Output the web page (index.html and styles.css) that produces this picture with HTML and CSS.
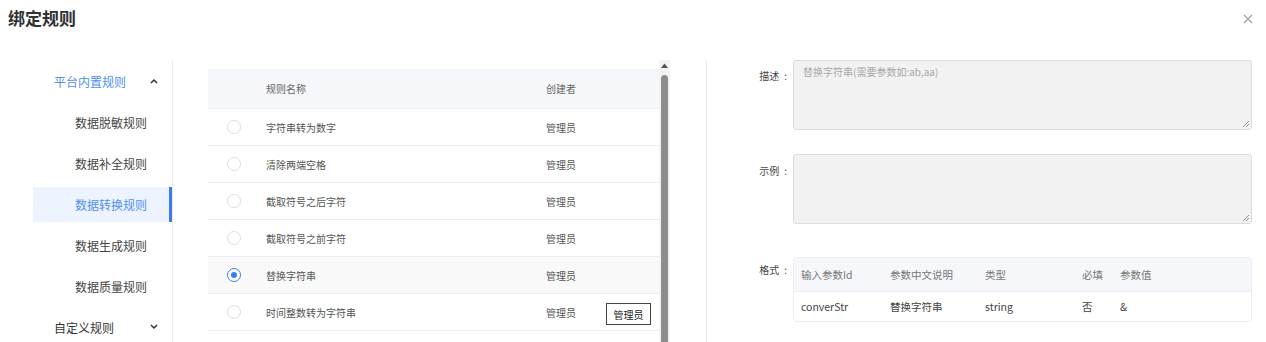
FILE: index.html
```html
<!DOCTYPE html>
<html lang="zh-CN">
<head>
<meta charset="utf-8">
<title>绑定规则</title>
<link rel="stylesheet" href="styles.css">
</head>
<body>
<div class="dialog">
  <div class="dlg-header">
    <div class="dlg-title">绑定规则</div>
    <svg class="dlg-close" width="10" height="10" viewBox="0 0 10 10"><path d="M1 1L9 9M9 1L1 9" stroke="#a0a0a0" stroke-width="1.2"/></svg>
  </div>
  <div class="dlg-body">
    <div class="menu">
      <div class="menu-group open">
        <span>平台内置规则</span>
        <svg class="caret" width="8" height="6" viewBox="0 0 8 6"><path d="M1 5L4 2L7 5" fill="none" stroke="#333" stroke-width="1.5"/></svg>
      </div>
      <div class="menu-item first">数据脱敏规则</div>
      <div class="menu-item">数据补全规则</div>
      <div class="menu-item active">数据转换规则</div>
      <div class="menu-item">数据生成规则</div>
      <div class="menu-item">数据质量规则</div>
      <div class="menu-group closed">
        <span>自定义规则</span>
        <svg class="caret" width="8" height="6" viewBox="0 0 8 6"><path d="M1 1L4 4L7 1" fill="none" stroke="#333" stroke-width="1.5"/></svg>
      </div>
    </div>

    <div class="table-wrap">
      <div class="rule-table">
        <div class="tr th">
          <div class="c-radio"></div>
          <div class="c-name">规则名称</div>
          <div class="c-creator">创建者</div>
        </div>
        <div class="tr">
          <div class="c-radio"><span class="radio"></span></div>
          <div class="c-name">字符串转为数字</div>
          <div class="c-creator">管理员</div>
        </div>
        <div class="tr">
          <div class="c-radio"><span class="radio"></span></div>
          <div class="c-name">清除两端空格</div>
          <div class="c-creator">管理员</div>
        </div>
        <div class="tr">
          <div class="c-radio"><span class="radio"></span></div>
          <div class="c-name">截取符号之后字符</div>
          <div class="c-creator">管理员</div>
        </div>
        <div class="tr">
          <div class="c-radio"><span class="radio"></span></div>
          <div class="c-name">截取符号之前字符</div>
          <div class="c-creator">管理员</div>
        </div>
        <div class="tr hover">
          <div class="c-radio"><span class="radio checked"></span></div>
          <div class="c-name">替换字符串</div>
          <div class="c-creator">管理员</div>
        </div>
        <div class="tr">
          <div class="c-radio"><span class="radio"></span></div>
          <div class="c-name">时间整数转为字符串</div>
          <div class="c-creator">管理员</div>
          <div class="tip">管理员</div>
        </div>
        <div class="tr">
          <div class="c-radio"><span class="radio"></span></div>
          <div class="c-name">&nbsp;</div>
          <div class="c-creator">&nbsp;</div>
        </div>
      </div>
      <div class="scrollbar">
        <svg class="sb-arrow" width="7" height="5" viewBox="0 0 7 5"><path d="M0 5L3.5 0.5L7 5Z" fill="#555"/></svg>
        <div class="sb-thumb"></div>
      </div>
    </div>

    <div class="detail">
      <div class="form-item desc">
        <label>描述<span class="colon">:</span></label>
        <div class="textarea"><span class="ph">替换字符串(需要参数如:ab,aa)</span><svg class="grip" width="6" height="6" viewBox="0 0 6 6"><path d="M6 0L0 6M6 3L3 6" stroke="#777" stroke-width="0.8"/></svg></div>
      </div>
      <div class="form-item example">
        <label>示例<span class="colon">:</span></label>
        <div class="textarea"><svg class="grip" width="6" height="6" viewBox="0 0 6 6"><path d="M6 0L0 6M6 3L3 6" stroke="#777" stroke-width="0.8"/></svg></div>
      </div>
      <div class="form-item format">
        <label>格式<span class="colon">:</span></label>
        <div class="param-table">
          <div class="pr ph-row">
            <div class="p1">输入参数Id</div>
            <div class="p2">参数中文说明</div>
            <div class="p3">类型</div>
            <div class="p4">必填</div>
            <div class="p5">参数值</div>
          </div>
          <div class="pr">
            <div class="p1">converStr</div>
            <div class="p2">替换字符串</div>
            <div class="p3">string</div>
            <div class="p4">否</div>
            <div class="p5">&amp;</div>
          </div>
        </div>
      </div>
    </div>
  </div>
</div>
</body>
</html>
```
FILE: styles.css
```css
* { box-sizing: border-box; }
html, body { margin: 0; padding: 0; background: #fff; }
body {
  width: 1266px;
  height: 342px;
  overflow: hidden;
  font-family: "Noto Sans CJK SC", "Noto Sans", sans-serif;
  color: #333;
}
.dialog { width: 1266px; height: 342px; }
.dlg-header {
  height: 60px;
  display: flex;
  justify-content: space-between;
  align-items: flex-start;
  padding: 6px 13px 0 8px;
}
.dlg-title {
  font-size: 17px;
  font-weight: 600;
  line-height: 24px;
  color: #303133;
}
.dlg-close { margin-top: 8px; }

.dlg-body { display: flex; align-items: flex-start; height: 282px; }

/* menu */
.menu {
  flex: none;
  width: 173px;
  height: 282px;
  border-right: 1px solid #ebebeb;
  padding-left: 33px;
  font-size: 12px;
}
.menu-group {
  display: flex;
  align-items: center;
  justify-content: space-between;
  height: 42px;
  padding: 0 14px 0 21px;
  color: #333;
}
.menu-group.open { color: #4f8ef7; }
.menu-group.closed { height: 40px; margin-top: 3px; }
.menu-group .caret { flex: none; }
.menu-item {
  height: 35px;
  line-height: 35px;
  padding-left: 42px;
  margin-top: 6px;
  color: #444;
  border-right: 3px solid transparent;
}
.menu-item.first { margin-top: 3px; }
.menu-item.active {
  background: #edf4ff;
  color: #4f8ef7;
  border-right-color: #3b7cf5;
}

/* left table */
.table-wrap {
  flex: none;
  margin-left: 35px;
  width: 462px;
  display: flex;
  height: 282px;
  overflow: hidden;
}
.rule-table { flex: none; width: 451px; padding-top: 9px; font-size: 10px; color: #555; }
.tr {
  position: relative;
  display: flex;
  align-items: center;
  height: 37px;
  border-bottom: 1px solid #ebeef5;
}
.tr.th {
  height: 40px;
  background: #f5f7fa;
  color: #666;
}
.tr.hover { background: #f9f9fa; }
.c-radio { flex: none; width: 58px; display: flex; justify-content: center; padding-right: 6px; }
.c-name { flex: none; width: 280px; }
.c-creator { flex: none; width: 60px; }
.radio {
  width: 14px;
  height: 14px;
  border-radius: 50%;
  border: 1px solid #dcdfe6;
  background: #fff;
  display: block;
}
.radio.checked {
  border-color: #3b7cf5;
  position: relative;
}
.radio.checked::after {
  content: "";
  position: absolute;
  left: 3px; top: 3px;
  width: 6px; height: 6px;
  border-radius: 50%;
  background: #3b7cf5;
}
.tip {
  position: absolute;
  left: 398px;
  top: 9px;
  width: 45px;
  height: 22px;
  border: 1px solid #444;
  background: #fff;
  color: #222;
  font-size: 10px;
  display: flex;
  align-items: center;
  justify-content: center;
}
.scrollbar {
  flex: none;
  width: 11px;
  background: #f3f3f3;
  display: flex;
  flex-direction: column;
  align-items: center;
  padding-top: 3px;
}
.sb-arrow { display: block; margin-bottom: 7px; }
.sb-thumb {
  width: 7px;
  flex: 1;
  background: #8d8d8d;
  border-radius: 4px 4px 0 0;
}

/* right detail */
.detail {
  flex: none;
  width: 560px;
  margin-left: 36px;
  border-left: 1px solid #ebebeb;
  height: 282px;
  padding-right: 14px;
  font-size: 10px;
}
.form-item { display: flex; align-items: flex-start; }
.form-item label {
  flex: none;
  width: 86px;
  text-align: right;
  padding-right: 6px;
  color: #444;
  line-height: 14px;
}
.form-item label .colon { margin-left: 5px; }
.form-item.desc label { margin-top: 9px; }
.form-item.example { margin-top: 24px; }
.form-item.example label { margin-top: 10px; }
.form-item.format { margin-top: 33px; }
.form-item.format label { margin-top: 6px; }
.textarea {
  flex: none;
  position: relative;
  width: 459px;
  height: 70px;
  background: #f2f2f2;
  border: 1px solid #dcdcdc;
  border-radius: 3px;
  padding: 4px 9px;
  color: #a8a8a8;
  line-height: 14px;
}
.grip { position: absolute; right: 2px; bottom: 2px; }
.param-table {
  flex: none;
  width: 459px;
  border: 1px solid #ebeef5;
  border-radius: 3px;
  overflow: hidden;
  font-size: 10.5px;
}
.pr {
  display: flex;
  align-items: center;
  height: 29px;
  color: #444;
}
.pr.ph-row {
  height: 34px;
  background: #f5f7fa;
  border-bottom: 1px solid #ebeef5;
  color: #777;
}
.p1 { flex: none; width: 96px; padding-left: 7px; }
.p2 { flex: none; width: 95px; }
.p3 { flex: none; width: 97px; }
.p4 { flex: none; width: 38px; }
.p5 { flex: 1; }
```
